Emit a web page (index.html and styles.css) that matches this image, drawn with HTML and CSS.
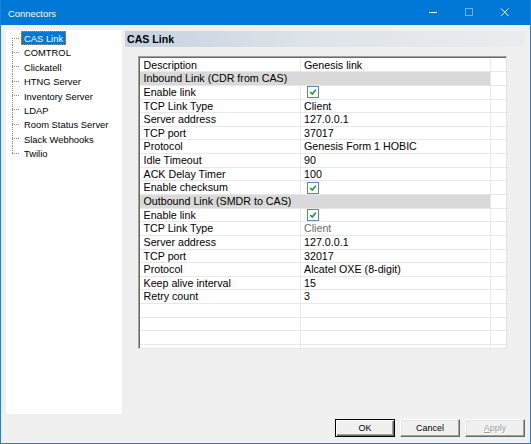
FILE: index.html
```html
<!DOCTYPE html>
<html>
<head>
<meta charset="utf-8">
<link rel="stylesheet" href="styles.css">
</head>
<body>
<div class="window">
  <div class="titlebar">
    <span class="title">Connectors</span>
    <div class="controls">
      <svg class="ctl" width="36" height="24" viewBox="0 0 36 24"><path d="M14 12.5 H22" stroke="#fff" stroke-width="1"/></svg>
      <svg class="ctl" width="36" height="24" viewBox="0 0 36 24"><rect x="14.5" y="8.5" width="7" height="7" fill="none" stroke="#6fb1e8" stroke-width="1"/></svg>
      <svg class="ctl" width="36" height="24" viewBox="0 0 36 24"><path d="M14 8.5 L21.5 16 M21.5 8.5 L14 16" stroke="#fff" stroke-width="1"/></svg>
    </div>
  </div>
  <div class="body">
    <div class="main">
      <div class="tree">
        <ul class="tree-list">
          <li class="first"><span class="conn"></span><span class="label selected">CAS Link</span></li>
          <li><span class="conn"></span><span class="label">COMTROL</span></li>
          <li><span class="conn"></span><span class="label">Clickatell</span></li>
          <li><span class="conn"></span><span class="label">HTNG Server</span></li>
          <li><span class="conn"></span><span class="label">Inventory Server</span></li>
          <li><span class="conn"></span><span class="label">LDAP</span></li>
          <li><span class="conn"></span><span class="label">Room Status Server</span></li>
          <li><span class="conn"></span><span class="label">Slack Webhooks</span></li>
          <li class="last"><span class="conn"></span><span class="label">Twilio</span></li>
        </ul>
      </div>
      <div class="panel">
        <div class="header">CAS Link</div>
        <div class="grid">
          <div class="row"><div class="c-name">Description</div><div class="c-val">Genesis link</div><div class="c-x"></div></div>
          <div class="row group"><div class="c-group">Inbound Link (CDR from CAS)</div><div class="c-x"></div></div>
          <div class="row"><div class="c-name">Enable link</div><div class="c-val"><span class="check"><svg width="10" height="10" viewBox="0 0 10 10"><path d="M2.2 5 L4.2 7 L7.8 2.8" fill="none" stroke="#1e9b28" stroke-width="1.6"/></svg></span></div><div class="c-x"></div></div>
          <div class="row"><div class="c-name">TCP Link Type</div><div class="c-val">Client</div><div class="c-x"></div></div>
          <div class="row"><div class="c-name">Server address</div><div class="c-val">127.0.0.1</div><div class="c-x"></div></div>
          <div class="row"><div class="c-name">TCP port</div><div class="c-val">37017</div><div class="c-x"></div></div>
          <div class="row"><div class="c-name">Protocol</div><div class="c-val">Genesis Form 1 HOBIC</div><div class="c-x"></div></div>
          <div class="row"><div class="c-name">Idle Timeout</div><div class="c-val">90</div><div class="c-x"></div></div>
          <div class="row"><div class="c-name">ACK Delay Timer</div><div class="c-val">100</div><div class="c-x"></div></div>
          <div class="row"><div class="c-name">Enable checksum</div><div class="c-val"><span class="check"><svg width="10" height="10" viewBox="0 0 10 10"><path d="M2.2 5 L4.2 7 L7.8 2.8" fill="none" stroke="#1e9b28" stroke-width="1.6"/></svg></span></div><div class="c-x"></div></div>
          <div class="row group"><div class="c-group">Outbound Link (SMDR to CAS)</div><div class="c-x"></div></div>
          <div class="row"><div class="c-name">Enable link</div><div class="c-val"><span class="check"><svg width="10" height="10" viewBox="0 0 10 10"><path d="M2.2 5 L4.2 7 L7.8 2.8" fill="none" stroke="#1e9b28" stroke-width="1.6"/></svg></span></div><div class="c-x"></div></div>
          <div class="row"><div class="c-name">TCP Link Type</div><div class="c-val disabled">Client</div><div class="c-x"></div></div>
          <div class="row"><div class="c-name">Server address</div><div class="c-val">127.0.0.1</div><div class="c-x"></div></div>
          <div class="row"><div class="c-name">TCP port</div><div class="c-val">32017</div><div class="c-x"></div></div>
          <div class="row"><div class="c-name">Protocol</div><div class="c-val">Alcatel OXE (8-digit)</div><div class="c-x"></div></div>
          <div class="row"><div class="c-name">Keep alive interval</div><div class="c-val">15</div><div class="c-x"></div></div>
          <div class="row"><div class="c-name">Retry count</div><div class="c-val">3</div><div class="c-x"></div></div>
          <div class="row"><div class="c-name"></div><div class="c-val"></div><div class="c-x"></div></div>
          <div class="row"><div class="c-name"></div><div class="c-val"></div><div class="c-x"></div></div>
          <div class="row"><div class="c-name"></div><div class="c-val"></div><div class="c-x"></div></div>
          <div class="row"><div class="c-name"></div><div class="c-val"></div><div class="c-x"></div></div>
        </div>
      </div>
    </div>
    <div class="buttons">
      <button class="btn default">OK</button>
      <button class="btn">Cancel</button>
      <button class="btn disabled"><u>A</u>pply</button>
    </div>
  </div>
</div>
</body>
</html>
```

FILE: styles.css
```css
* { box-sizing: border-box; }
html, body { margin: 0; padding: 0; }
body { background: #ffffff; font-family: "Liberation Sans", Arial, sans-serif; }

.window {
  width: 531px;
  height: 444px;
  display: flex;
  flex-direction: column;
  background: #0078d7;
  border: 1px solid #1c84d8;
  border-top: none;
}

.titlebar {
  height: 25px;
  flex: none;
  display: flex;
  align-items: center;
  background: #0078d7;
  color: #fff;
}
.title {
  font-size: 9.4px;
  padding-left: 7px;
  padding-top: 1px;
  flex: 1;
}
.controls { display: flex; align-self: flex-start; margin-right: 7px; }
.ctl { display: block; }

.body {
  flex: 1;
  background: #f0f0f0;
  display: flex;
  flex-direction: column;
  padding: 5px 5px 6px 5px;
}
.main {
  flex: 1;
  display: flex;
  gap: 3px;
  min-height: 0;
}

.tree {
  width: 116px;
  background: #fff;
  padding-top: 0.6px;
}
.tree-list {
  list-style: none;
  margin: 0;
  padding: 0 0 0 6px;
}
.tree-list li {
  height: 14.375px;
  display: flex;
  align-items: center;
  font-size: 9.4px;
  color: #000;
}
.conn {
  width: 9px;
  height: 100%;
  flex: none;
  background-image:
    repeating-linear-gradient(to right, #8a8a8a 0 1px, transparent 1px 2px),
    repeating-linear-gradient(to bottom, #8a8a8a 0 1px, transparent 1px 2px);
  background-size: 8px 1px, 1px 100%;
  background-position: 0 7px, 0 0;
  background-repeat: no-repeat;
}
.tree-list li.first .conn {
  background-size: 8px 1px, 1px 50%;
  background-position: 0 7px, 0 100%;
}
.tree-list li.last .conn {
  background-size: 8px 1px, 1px 8px;
  background-position: 0 7px, 0 0;
}
.label {
  margin-left: 0;
  padding: 0 2px;
  line-height: 13px;
  height: 13.5px;
  white-space: nowrap;
  border: 1px solid transparent;
}
.label.selected {
  background: #0078d7;
  color: #fff;
  border: 1px dotted #e0873a;
}

.panel {
  flex: 1;
  display: flex;
  flex-direction: column;
  min-width: 0;
}
.header {
  height: 16.5px;
  margin-top: 0.5px;
  background: linear-gradient(to right, #c4d2df 0%, #dde3e9 45%, #eaecef 100%);
  font-weight: bold;
  font-size: 10.6px;
  line-height: 16.5px;
  padding-left: 2px;
  color: #000;
}

.grid {
  margin: 9px 0 0 12.5px;
  width: 369px;
  height: 292.5px;
  overflow: hidden;
  background: #fff;
  border-top: 1px solid #a0a0a0;
  border-left: 1px solid #a0a0a0;
  border-right: 1px solid #e3e3e3;
  border-bottom: 1px solid #e3e3e3;
  box-shadow: inset 1px 1px 0 #696969;
  padding: 1.6px 0 0 1px;
  font-size: 10.7px;
  color: #000;
}
.row {
  display: flex;
  height: 13.65px;
  border-bottom: 1px solid #e8e8e8;
}
.row > div {
  height: 100%;
  line-height: 12.6px;
  white-space: nowrap;
  overflow: hidden;
}
.c-name {
  width: 161px;
  padding-left: 4px;
  border-right: 1px solid #e8e8e8;
}
.c-val {
  width: 190px;
  padding-left: 3.5px;
  border-right: 1px solid #e8e8e8;
}
.c-x { width: 15px; }
.c-group {
  width: 351px;
  padding-left: 4px;
  background: #d9d9d9;
  border-right: 1px solid #e8e8e8;
}
.c-val.disabled { color: #6d6d6d; }

.check {
  display: inline-block;
  width: 12px;
  height: 12px;
  margin-left: 3px;
  margin-top: 0.5px;
  border: 1px solid #5a84b5;
  background: #fff;
  vertical-align: top;
}
.check svg { display: block; }

.buttons {
  flex: none;
  display: flex;
  justify-content: flex-end;
  gap: 5px;
  margin-top: 5.5px;
  height: 18px;
}
.btn {
  width: 60px;
  height: 18px;
  padding: 0;
  font-family: "Liberation Sans", Arial, sans-serif;
  font-size: 9px;
  color: #000;
  background: #f0f0f0;
  border-top: 1px solid #ffffff;
  border-left: 1px solid #ffffff;
  border-right: 1px solid #696969;
  border-bottom: 1px solid #696969;
  box-shadow: inset -1px -1px 0 #a0a0a0, inset 1px 1px 0 #e3e3e3;
}
.btn.default {
  border: 1px solid #000;
  box-shadow: inset 1px 1px 0 #fff, inset -1px -1px 0 #696969, inset -2px -2px 0 #a0a0a0;
}
.btn.disabled {
  color: #a0a0a0;
  text-shadow: 1px 1px 0 #fff;
}
.btn u { text-decoration: underline; }
```
